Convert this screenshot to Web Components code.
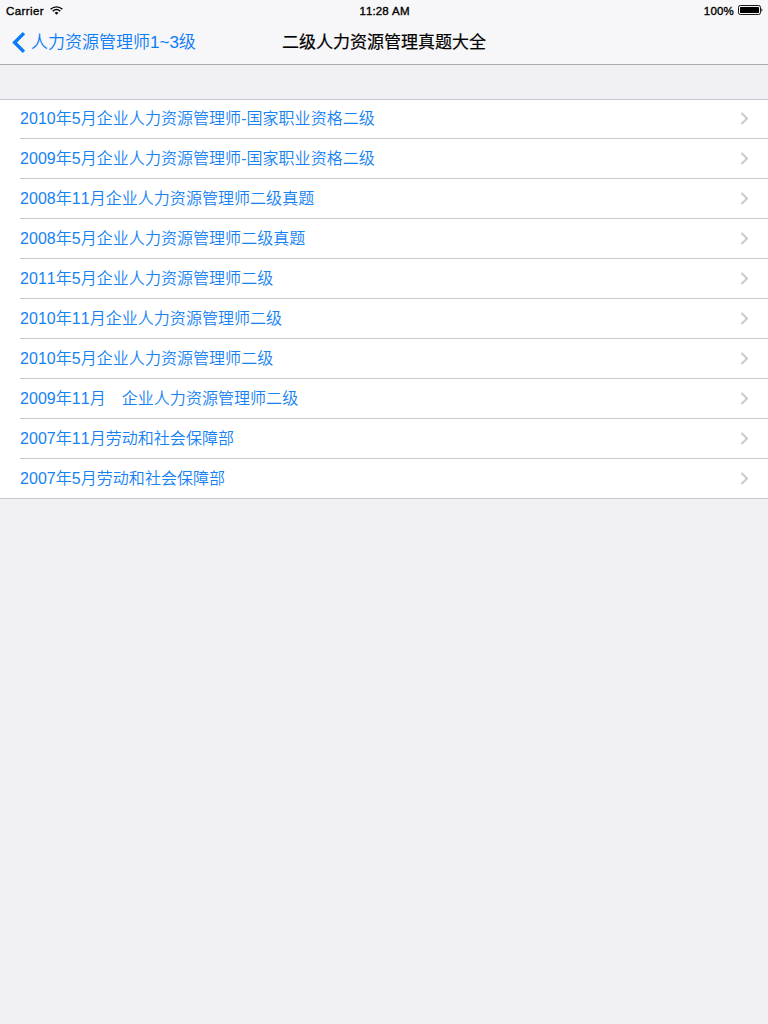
<!DOCTYPE html>
<html lang="zh-CN">
<head>
<meta charset="utf-8">
<meta name="viewport" content="width=device-width, initial-scale=1">
<title>二级人力资源管理真题大全</title>
<style>
  body {
    margin: 0;
    min-height: 100vh;
    background: #efeff4;
    font-family: "Liberation Sans", "Noto Sans CJK SC", sans-serif;
    font-kerning: none;
  }
</style>
</head>
<body>
<exam-screen>
  <status-bar slot="header" carrier="Carrier" time="11:28 AM" battery="100%"></status-bar>
  <nav-bar slot="header" back="人力资源管理师1~3级">二级人力资源管理真题大全</nav-bar>
  <table-group>
    <table-row>2010年5月企业人力资源管理师-国家职业资格二级</table-row>
    <table-row>2009年5月企业人力资源管理师-国家职业资格二级</table-row>
    <table-row>2008年11月企业人力资源管理师二级真题</table-row>
    <table-row>2008年5月企业人力资源管理师二级真题</table-row>
    <table-row>2011年5月企业人力资源管理师二级</table-row>
    <table-row>2010年11月企业人力资源管理师二级</table-row>
    <table-row>2010年5月企业人力资源管理师二级</table-row>
    <table-row>2009年11月　企业人力资源管理师二级</table-row>
    <table-row>2007年11月劳动和社会保障部</table-row>
    <table-row>2007年5月劳动和社会保障部</table-row>
  </table-group>
</exam-screen>

<script>
// Shared base: puts the subclass template into an open shadow root
class BaseElement extends HTMLElement {
  constructor() {
    super();
    this.attachShadow({ mode: 'open' });
  }

  connectedCallback() {
    this.shadowRoot.innerHTML = this.template();
  }

  attr(name) {
    return this.getAttribute(name) || '';
  }
}

// ── Screen: bars on top, content below ──

class ExamScreen extends BaseElement {
  template() {
    return `
      <style>
        :host { display: flex; flex-direction: column; min-height: 100vh; }
        header {
          box-sizing: border-box;
          height: 65px;
          background: #f7f6f8;
          border-bottom: 1px solid #a9a9ac;
        }
        main { padding-top: 34px; }
      </style>
      <header><slot name="header"></slot></header>
      <main><slot></slot></main>
    `;
  }
}

// ── Status bar ──

class StatusBar extends BaseElement {
  template() {
    return `
      <style>
        :host {
          display: grid;
          grid-template-columns: 1fr auto 1fr;
          align-items: center;
          box-sizing: border-box;
          height: 20px;
          padding: 2px 5px 0 6px;
          color: #000;
          font-size: 11.5px;
          line-height: 18px;
          letter-spacing: 0.12px;
          -webkit-text-stroke: 0.35px #000;
        }
        .left, .right { display: flex; align-items: center; }
        .left { gap: 6px; letter-spacing: 0.42px; }
        .right { justify-content: flex-end; gap: 4px; letter-spacing: 0.2px; }
        svg { display: block; margin-top: -2px; }
      </style>
      <div class="left">
        <span>${this.attr('carrier')}</span>
        <svg width="13" height="9" viewBox="0 0 13 9" fill="none" stroke="#000" stroke-width="1.4">
          <path d="M.6 3.2C4 .1 9 .1 12.4 3.2M2.7 5.2c2.2-1.9 5.4-1.9 7.6 0"/>
          <path d="M6.5 8.8 4.5 6.7c1.2-1 2.8-1 4 0z" fill="#000" stroke="none"/>
        </svg>
      </div>
      <span>${this.attr('time')}</span>
      <div class="right">
        <span>${this.attr('battery')}</span>
        <svg width="25" height="10" viewBox="0 0 25 10">
          <rect x=".5" y=".5" width="22" height="9" rx="1.8" fill="none" stroke="#000" stroke-width=".9"/>
          <rect x="2" y="2" width="19" height="6" rx=".6"/>
          <path d="M23.5 3.2c1.2.4 1.2 3.2 0 3.6z"/>
        </svg>
      </div>
    `;
  }
}

// ── Navigation bar ──

class NavBar extends BaseElement {
  template() {
    return `
      <style>
        :host {
          display: grid;
          grid-template-columns: 1fr auto 1fr;
          align-items: center;
          height: 44px;
          padding: 0 12px;
          font-size: 17px;
          line-height: 24px;
        }
        span { padding-top: 2px; }
        .back { display: flex; align-items: center; gap: 6px; color: #0a7cf5; font-weight: 350; }
        .title { color: #000; font-weight: 400; -webkit-text-stroke: 0.2px #000; }
        svg { display: block; }
      </style>
      <div class="back">
        <svg width="13" height="21" viewBox="0 0 13 21" fill="none" stroke="#0a7cf5" stroke-width="3.4">
          <path d="M12 1.2 2.600 10.5l9.400 9.300"/>
        </svg>
        <span>${this.attr('back')}</span>
      </div>
      <span class="title"><slot></slot></span>
    `;
  }
}

// ── Grouped table ──

class TableGroup extends BaseElement {
  template() {
    return `
      <style>
        :host {
          display: block;
          background: #fff;
          box-shadow: inset 0 1px #c8c7cc, inset 0 -1px #c8c7cc;
        }
      </style>
      <slot></slot>
    `;
  }
}

class TableRow extends BaseElement {
  template() {
    return `
      <style>
        :host { display: block; padding-left: 20px; }
        .row {
          display: flex;
          align-items: center;
          justify-content: space-between;
          box-sizing: border-box;
          height: 40px;
          padding-right: 19.500px;
          border-bottom: 1px solid #c8c7cc;
          color: #1682f2;
          font-size: 16px;
          font-weight: 350;
          letter-spacing: 0.04px;
          line-height: 38px;
        }
        svg { display: block; }
      </style>
      <div class="row">
        <span><slot></slot></span>
        <svg width="9" height="13" viewBox="0 0 9 13" fill="none" stroke="#c7c7cc" stroke-width="1.900">
          <path d="M1.500 1 7 6.500 1.500 12"/>
        </svg>
      </div>
    `;
  }
}

customElements.define('exam-screen', ExamScreen);
customElements.define('status-bar', StatusBar);
customElements.define('nav-bar', NavBar);
customElements.define('table-group', TableGroup);
customElements.define('table-row', TableRow);
</script>
</body>
</html>
